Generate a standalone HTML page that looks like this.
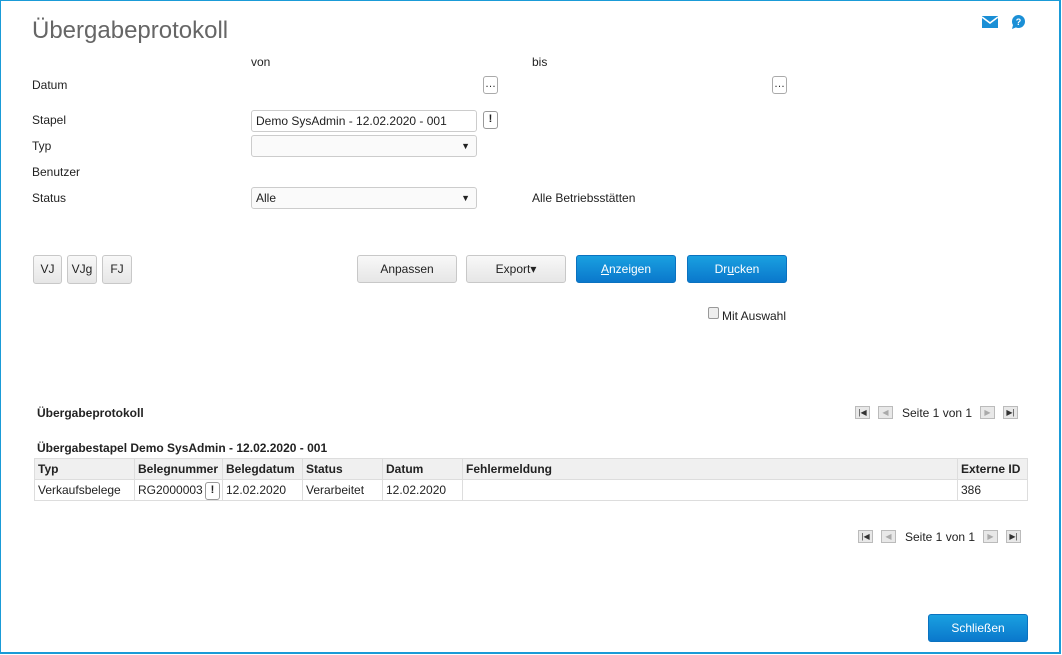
<!DOCTYPE html>
<html><head><meta charset="utf-8"><style>
*{box-sizing:border-box;margin:0;padding:0}
body{width:1062px;height:655px;background:#fff;font-family:"Liberation Sans",Arial,sans-serif;font-size:12px;color:#222;position:relative;overflow:hidden}
.frame{position:absolute;left:0;top:0;width:1061px;height:654px;border:1px solid #1a9bd7;border-width:1px 2px 2px 1px}
.a{position:absolute;white-space:nowrap}
.inp{position:absolute;height:22px;border:1px solid #ccc;border-radius:3px;background:#fafafa;padding:3px 4px;font-size:12px}
.arr{position:absolute;right:6px;top:5px;font-size:9px;line-height:10px}
.sm{position:absolute;width:15px;height:18px;border:1px solid #999;border-radius:3px;background:#fff;text-align:center;font-size:11px;line-height:15px;font-weight:bold}
.btn{position:absolute;height:28px;border:1px solid #c8c8c8;border-radius:3px;background:linear-gradient(#f8f8f8,#e6e6e6);text-align:center;line-height:26px;font-size:12px}
.pb{background:linear-gradient(#1aa0e0,#0a78cc);border-color:#0a72c0;color:#fff}
.pg{position:absolute;width:15px;height:13px;border:1px solid #bbb;background:#e8e8e8;font-size:8px;line-height:11px;text-align:center;color:#333}
table{position:absolute;left:34px;top:458px;width:994px;border-collapse:collapse}
td,th{border:1px solid #ddd;height:21px;padding:0 3px;text-align:left;font-size:12px}
th{background:#f0f0f0;font-weight:bold}
</style></head><body>
<div class="frame"></div>
<div class="a" style="left:32px;top:17px;font-size:24px;color:#666">Übergabeprotokoll</div>
<svg class="a" style="left:982px;top:16px" width="16" height="12"><rect width="16" height="12" fill="#1a8fd6"/><path d="M0 1 L8 7 L16 1" stroke="#fff" stroke-width="1.6" fill="none"/></svg>
<svg class="a" style="left:1010px;top:14px" width="16" height="16"><circle cx="8.5" cy="7.5" r="6.5" fill="#1a8fd6"/><path d="M3 11 L2 15 L7 13Z" fill="#1a8fd6"/><text x="8.5" y="11" font-size="9" font-weight="bold" fill="#fff" text-anchor="middle" font-family="Liberation Sans">?</text></svg>
<div class="a" style="left:251px;top:55px">von</div>
<div class="a" style="left:532px;top:55px">bis</div>
<div class="a" style="left:32px;top:78px">Datum</div>
<div class="sm" style="left:483px;top:76px;border-color:#aaa;font-weight:normal">…</div>
<div class="sm" style="left:772px;top:76px;border-color:#aaa;font-weight:normal">…</div>
<div class="a" style="left:32px;top:113px">Stapel</div>
<div class="inp" style="left:251px;top:110px;width:226px;background:#fff">Demo SysAdmin - 12.02.2020 - 001</div>
<div class="sm" style="left:483px;top:111px">!</div>
<div class="a" style="left:32px;top:139px">Typ</div>
<div class="inp" style="left:251px;top:135px;width:226px"><span class="arr">▼</span></div>
<div class="a" style="left:32px;top:165px">Benutzer</div>
<div class="a" style="left:32px;top:191px">Status</div>
<div class="inp" style="left:251px;top:187px;width:226px">Alle<span class="arr">▼</span></div>
<div class="a" style="left:532px;top:191px">Alle Betriebsstätten</div>
<div class="btn" style="left:33px;top:255px;width:29px;height:29px">VJ</div>
<div class="btn" style="left:67px;top:255px;width:30px;height:29px">VJg</div>
<div class="btn" style="left:102px;top:255px;width:30px;height:29px">FJ</div>
<div class="btn" style="left:357px;top:255px;width:100px">Anpassen</div>
<div class="btn" style="left:466px;top:255px;width:100px">Export▾</div>
<div class="btn pb" style="left:576px;top:255px;width:100px"><u>A</u>nzeigen</div>
<div class="btn pb" style="left:687px;top:255px;width:100px">Dr<u>u</u>cken</div>
<div class="a" style="left:708px;top:307px;width:11px;height:12px;border:1px solid #999;border-radius:2px;background:#eee"></div>
<div class="a" style="left:722px;top:309px">Mit Auswahl</div>
<div class="a" style="left:37px;top:406px;font-weight:bold">Übergabeprotokoll</div>
<div class="pg" style="left:855px;top:406px">|◀</div><div class="pg" style="left:878px;top:406px;color:#aaa">◀</div>
<div class="a" style="left:902px;top:406px">Seite 1 von 1</div>
<div class="pg" style="left:980px;top:406px;color:#aaa">▶</div><div class="pg" style="left:1003px;top:406px">▶|</div>
<div class="a" style="left:37px;top:441px;font-weight:bold">Übergabestapel Demo SysAdmin - 12.02.2020 - 001</div>
<table><tr><th style="width:100px">Typ</th><th style="width:88px">Belegnummer</th><th style="width:80px">Belegdatum</th><th style="width:80px">Status</th><th style="width:80px">Datum</th><th>Fehlermeldung</th><th style="width:70px">Externe ID</th></tr>
<tr><td>Verkaufsbelege</td><td style="position:relative">RG2000003<span class="sm" style="right:2px;top:2px">!</span></td><td>12.02.2020</td><td>Verarbeitet</td><td>12.02.2020</td><td></td><td>386</td></tr></table>
<div class="pg" style="left:858px;top:530px">|◀</div><div class="pg" style="left:881px;top:530px;color:#aaa">◀</div>
<div class="a" style="left:905px;top:530px">Seite 1 von 1</div>
<div class="pg" style="left:983px;top:530px;color:#aaa">▶</div><div class="pg" style="left:1006px;top:530px">▶|</div>
<div class="btn pb" style="left:928px;top:614px;width:100px">Schließen</div>
</body></html>
